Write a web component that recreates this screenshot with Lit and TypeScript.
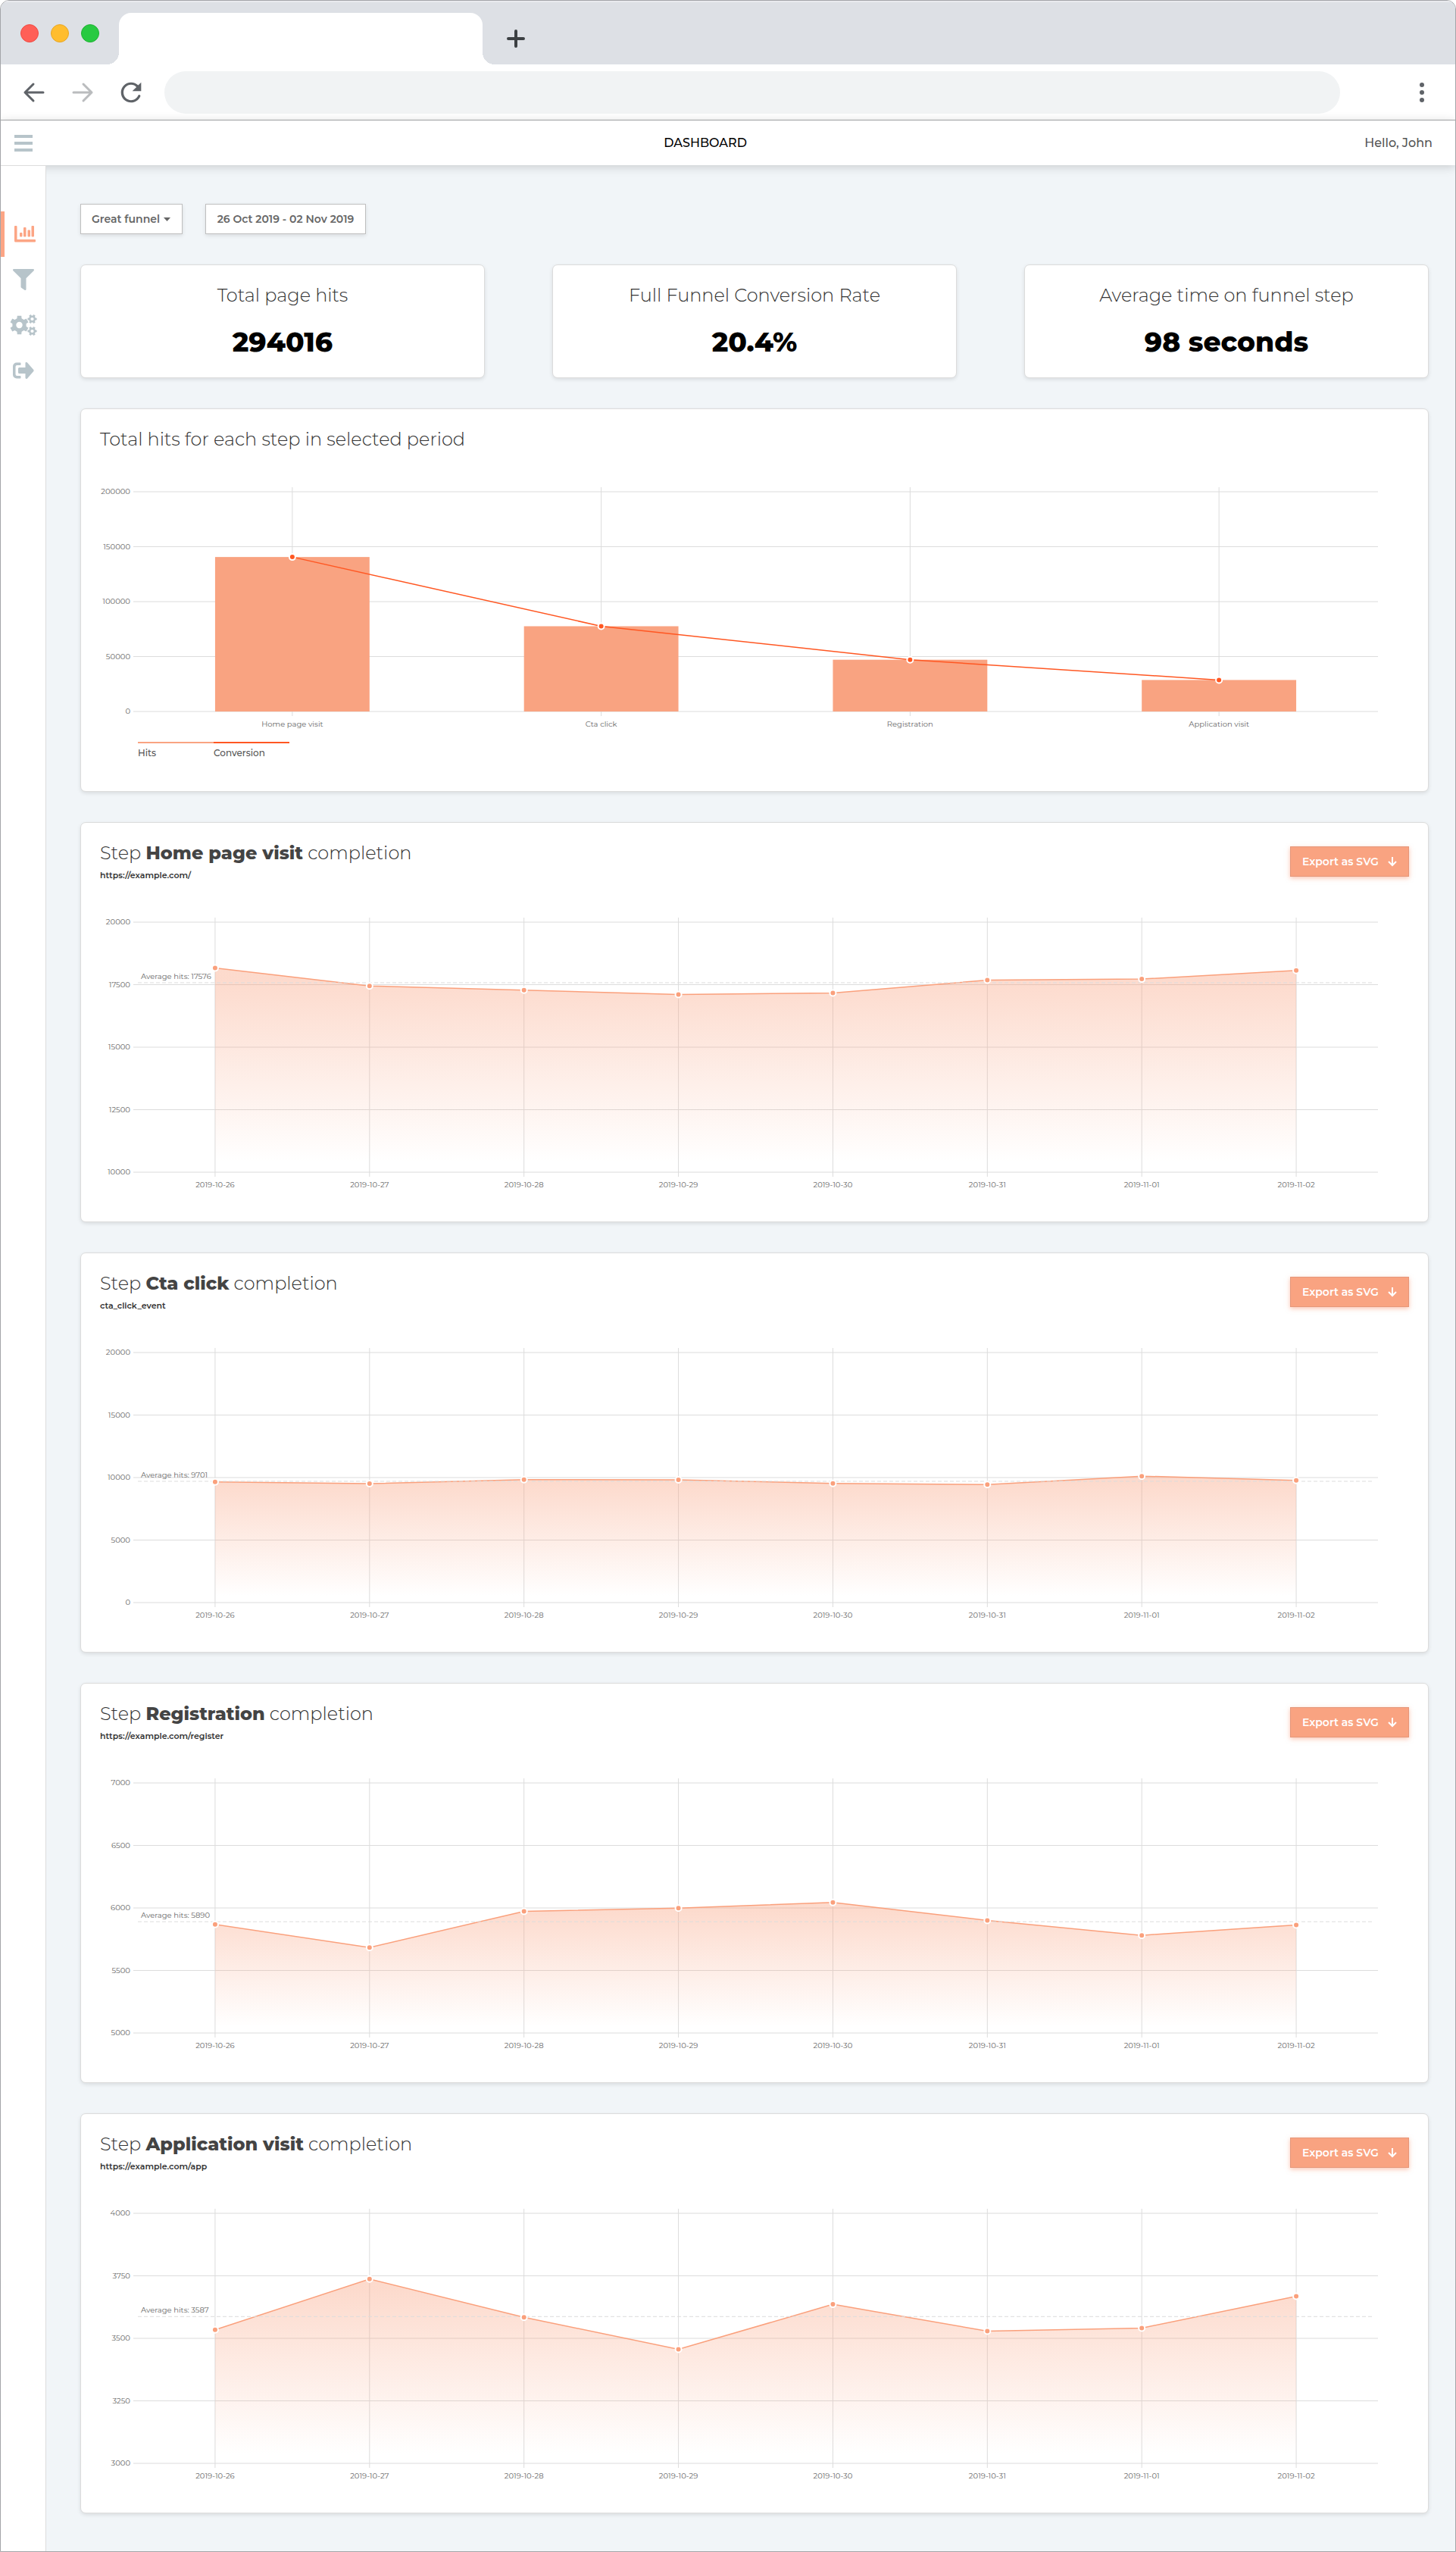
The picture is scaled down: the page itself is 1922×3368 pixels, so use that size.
import { LitElement, html, svg, css } from "lit";
import { customElement, property, state } from "lit/decorators.js";

interface Step {
  name: string;
  target: string;
  average: number;
  min: number;
  max: number;
  values: number[];
}

const DATES = [
  "2019-10-26",
  "2019-10-27",
  "2019-10-28",
  "2019-10-29",
  "2019-10-30",
  "2019-10-31",
  "2019-11-01",
  "2019-11-02",
];

const STATS = [
  { label: "Total page hits", value: "294016" },
  { label: "Full Funnel Conversion Rate", value: "20.4%" },
  { label: "Average time on funnel step", value: "98 seconds" },
];

const FUNNEL = [
  { label: "Home page visit", hits: 140608 },
  { label: "Cta click", hits: 77608 },
  { label: "Registration", hits: 47120 },
  { label: "Application visit", hits: 28680 },
];

const STEPS: Step[] = [
  {
    name: "Home page visit",
    target: "https://example.com/",
    average: 17576,
    min: 10000,
    max: 20000,
    values: [18165, 17448, 17280, 17105, 17170, 17680, 17724, 18070],
  },
  {
    name: "Cta click",
    target: "cta_click_event",
    average: 9701,
    min: 0,
    max: 20000,
    values: [9655, 9512, 9834, 9820, 9536, 9439, 10112, 9770],
  },
  {
    name: "Registration",
    target: "https://example.com/register",
    average: 5890,
    min: 5000,
    max: 7000,
    values: [5868, 5684, 5973, 5998, 6044, 5900, 5781, 5864],
  },
  {
    name: "Application visit",
    target: "https://example.com/app",
    average: 3587,
    min: 3000,
    max: 4000,
    values: [3534, 3737, 3584, 3456, 3636, 3529, 3541, 3668],
  },
];

const PLOT_LEFT = 50;
const PLOT_RIGHT = 47;
const TICK = 6;

/** Outline of a six-toothed gear with a round hole, for an even-odd fill. */
function gearPath(cx: number, cy: number, outer: number, hole: number, turn: number): string {
  const root = outer * 0.74;
  const points: string[] = [];
  for (let i = 0; i < 6; i++) {
    const mid = (i * 60 + turn) * (Math.PI / 180);
    const corners: Array<[number, number]> = [
      [-0.34, root],
      [-0.22, outer],
      [0.22, outer],
      [0.34, root],
    ];
    for (const [offset, radius] of corners) {
      const x = cx + Math.cos(mid + offset) * radius;
      const y = cy + Math.sin(mid + offset) * radius;
      points.push(`${x.toFixed(2)} ${y.toFixed(2)}`);
    }
  }
  return (
    `M${points.join("L")}Z` +
    `M${cx - hole} ${cy}a${hole} ${hole} 0 1 0 ${hole * 2} 0a${hole} ${hole} 0 1 0 ${-hole * 2} 0Z`
  );
}

const chartStyles = css`
  :host {
    display: block;
    min-width: 0;
  }
  svg {
    display: block;
    width: 100%;
  }
  text {
    font-family: Montserrat, Inter, sans-serif;
    font-size: 10px;
    fill: #666;
  }
  .grid {
    stroke: #dcdcdc;
    stroke-width: 1;
  }
  .end {
    text-anchor: end;
  }
  .middle {
    text-anchor: middle;
  }
`;

/** Base for charts that redraw to the width of their container. */
class SizedChart extends LitElement {
  @state() protected chartWidth = 1728;

  private observer?: ResizeObserver;

  connectedCallback() {
    super.connectedCallback();
    this.observer = new ResizeObserver((entries) => {
      const width = Math.round(entries[0].contentRect.width);
      if (width > 0) this.chartWidth = width;
    });
    this.observer.observe(this);
  }

  disconnectedCallback() {
    this.observer?.disconnect();
    super.disconnectedCallback();
  }

  protected centre(index: number, count: number): number {
    const span = this.chartWidth - PLOT_LEFT - PLOT_RIGHT;
    return PLOT_LEFT + (span / count) * (index + 0.5);
  }

  protected grid(top: number, bottom: number, ticks: number[], labels: string[]) {
    const right = this.chartWidth - PLOT_RIGHT + TICK;
    const gap = (bottom - top) / (ticks.length - 1);
    return svg`
      ${ticks.map((tick, i) => {
        const y = top + gap * i;
        return svg`
          <line class="grid" x1=${PLOT_LEFT - TICK} x2=${right} y1=${y} y2=${y}></line>
          <text class="end" x=${PLOT_LEFT - 10} y=${y + 3}>${tick}</text>`;
      })}
      ${labels.map((label, i) => {
        const x = this.centre(i, labels.length);
        return svg`
          <line class="grid" x1=${x} x2=${x} y1=${top - TICK} y2=${bottom + TICK}></line>
          <text class="middle" x=${x} y=${bottom + 20}>${label}</text>`;
      })}`;
  }
}

@customElement("funnel-chart")
export class FunnelChart extends SizedChart {
  static styles = [
    chartStyles,
    css`
      .bar {
        fill: #f9a381;
      }
      .line {
        fill: none;
        stroke: #ff5722;
        stroke-width: 1.5;
      }
      .dot {
        fill: #ff5722;
        stroke: #fff;
        stroke-width: 2;
      }
    `,
  ];

  render() {
    const top = 53;
    const bottom = 343;
    const max = 200000;
    const y = (value: number) => bottom - (value / max) * (bottom - top);
    const band = (this.chartWidth - PLOT_LEFT - PLOT_RIGHT) / FUNNEL.length;
    const points = FUNNEL.map((step, i) => ({ x: this.centre(i, FUNNEL.length), y: y(step.hits) }));
    return html`
      <svg height="368" role="img" aria-label="Hits and conversion by step">
        ${this.grid(top, bottom, [200000, 150000, 100000, 50000, 0], FUNNEL.map((s) => s.label))}
        ${points.map(
          (p) => svg`<rect class="bar" x=${p.x - band / 4} y=${p.y} width=${band / 2} height=${bottom - p.y}></rect>`,
        )}
        <polyline class="line" points=${points.map((p) => `${p.x},${p.y}`).join(" ")}></polyline>
        ${points.map((p) => svg`<circle class="dot" cx=${p.x} cy=${p.y} r="4"></circle>`)}
      </svg>
    `;
  }
}

@customElement("step-chart")
export class StepChart extends SizedChart {
  @property({ attribute: false }) step!: Step;

  static styles = [
    chartStyles,
    css`
      .area {
        fill: url(#fade);
      }
      .line {
        fill: none;
        stroke: #faa07c;
        stroke-width: 1.5;
      }
      .dot {
        fill: #faa07c;
        stroke: #fff;
        stroke-width: 2;
      }
      .average {
        stroke: #dcdcdc;
        stroke-dasharray: 5 3;
      }
    `,
  ];

  render() {
    const { min, max, values, average, name } = this.step;
    const top = 53;
    const bottom = 383;
    const y = (value: number) => bottom - ((value - min) / (max - min)) * (bottom - top);
    const ticks = [4, 3, 2, 1, 0].map((n) => min + ((max - min) / 4) * n);
    const points = values.map((v, i) => ({ x: this.centre(i, values.length), y: y(v) }));
    const path = points.map((p) => `${p.x},${p.y}`).join(" ");
    const first = points[0].x;
    const last = points[points.length - 1].x;
    return html`
      <svg height="424" role="img" aria-label="Daily hits for ${name}">
        <defs>
          <linearGradient id="fade" x1="0" y1="0" x2="0" y2="1">
            <stop offset="5%" stop-color="#f9a381" stop-opacity="0.4"></stop>
            <stop offset="95%" stop-color="#f9a381" stop-opacity="0"></stop>
          </linearGradient>
        </defs>
        ${this.grid(top, bottom, ticks, DATES)}
        <polygon class="area" points="${first},${bottom} ${path} ${last},${bottom}"></polygon>
        <polyline class="line" points=${path}></polyline>
        <line
          class="average"
          x1=${PLOT_LEFT}
          x2=${this.chartWidth - PLOT_RIGHT}
          y1=${y(average)}
          y2=${y(average)}
        ></line>
        <text x=${PLOT_LEFT + 4} y=${y(average) - 5}>Average hits: ${average}</text>
        ${points.map((p) => svg`<circle class="dot" cx=${p.x} cy=${p.y} r="4"></circle>`)}
      </svg>
    `;
  }
}

@customElement("browser-bar")
export class BrowserBar extends LitElement {
  static styles = css`
    :host {
      display: block;
    }
    .strip {
      display: flex;
      align-items: flex-end;
      height: 84px;
      background: #dde0e5;
      box-shadow: inset 0 2px 0 #e9eaee;
    }
    .lights {
      display: flex;
      align-self: center;
      gap: 16px;
      padding: 2px 26px 0 26px;
    }
    .light {
      width: 24px;
      height: 24px;
      box-sizing: border-box;
      border-radius: 50%;
    }
    .red {
      background: #ff5f57;
      border: 1px solid #f04a42;
    }
    .amber {
      background: #ffbd2e;
      border: 1px solid #e8a624;
    }
    .green {
      background: #28ca41;
      border: 1px solid #1fb232;
    }
    .tab {
      position: relative;
      width: 480px;
      height: 68px;
      background: #fff;
      border-radius: 16px 16px 0 0;
    }
    .tab::before,
    .tab::after {
      content: "";
      position: absolute;
      bottom: 0;
      width: 16px;
      height: 16px;
    }
    .tab::before {
      right: 100%;
      background: radial-gradient(circle at 0 0, transparent 16px, #fff 16px);
    }
    .tab::after {
      left: 100%;
      background: radial-gradient(circle at 100% 0, transparent 16px, #fff 16px);
    }
    button {
      display: flex;
      padding: 0;
      border: 0;
      background: none;
    }
    .plus {
      margin: 0 0 22px 32px;
    }
    .tools {
      display: flex;
      align-items: center;
      height: 73px;
      background: #fff;
      border-bottom: 1px solid #a9abad;
    }
    .nav {
      display: flex;
      gap: 24px;
      padding: 0 24px;
    }
    .address {
      flex: 1;
      min-width: 0;
      height: 56px;
      box-sizing: border-box;
      padding: 0 28px;
      border: 0;
      border-radius: 28px;
      background: #f1f3f4;
      font: 18px Inter, sans-serif;
    }
    .menu {
      margin: 0 24px 0 88px;
    }
  `;

  render() {
    return html`
      <div class="strip">
        <div class="lights">
          <span class="light red"></span>
          <span class="light amber"></span>
          <span class="light green"></span>
        </div>
        <div class="tab"></div>
        <button class="plus" aria-label="New tab">
          <svg width="24" height="24" fill="none" stroke="#3c4043" stroke-width="4" stroke-linecap="round">
            <path d="M12 2V22M2 12H22"></path>
          </svg>
        </button>
      </div>
      <div class="tools">
        <div class="nav">
          <button aria-label="Back">
            <svg width="40" height="40" fill="none" stroke="#5f6368" stroke-width="3" stroke-linecap="round" stroke-linejoin="round">
              <path d="M32 20H8M19 9L8 20L19 31"></path>
            </svg>
          </button>
          <button aria-label="Forward">
            <svg width="40" height="40" fill="none" stroke="#babcbe" stroke-width="3" stroke-linecap="round" stroke-linejoin="round">
              <path d="M8 20H32M21 9L32 20L21 31"></path>
            </svg>
          </button>
          <button aria-label="Reload">
            <svg width="40" height="40" viewBox="0 0 24 24" fill="#5f6368">
              <path
                d="M17.65 6.35C16.2 4.9 14.21 4 12 4c-4.42 0-7.99 3.58-7.99 8s3.57 8 7.99 8c3.3 0 6.1-2 7.35-4.85a.9.9 0 0 0-1.7-.75C16.7 16.6 14.5 18.1 12 18.1c-3.31 0-6-2.79-6-6.1s2.69-6.1 6-6.1c1.66 0 3.14.75 4.22 1.88L13 11h7V4z"
              ></path>
            </svg>
          </button>
        </div>
        <input class="address" type="text" aria-label="Address" />
        <button class="menu" aria-label="Menu">
          <svg width="40" height="40" fill="#5f6368">
            <circle cx="20" cy="10" r="3"></circle>
            <circle cx="20" cy="20" r="3"></circle>
            <circle cx="20" cy="30" r="3"></circle>
          </svg>
        </button>
      </div>
    `;
  }
}

@customElement("app-root")
export class AppRoot extends LitElement {
  static styles = css`
    :host {
      display: block;
      font-family: Montserrat, Inter, sans-serif;
      font-size: 14px;
      color: #444;
      background: #fff;
    }
    .window {
      overflow: hidden;
      border: 1px solid #a3a5a8;
      border-radius: 12px 12px 0 0;
    }
    .header {
      position: relative;
      display: flex;
      align-items: center;
      justify-content: space-between;
      height: 59px;
      padding-right: 30px;
      background: #fff;
      box-shadow: 0 2px 12px rgba(0, 0, 0, 0.18);
    }
    .burger {
      display: flex;
      justify-content: center;
      width: 60px;
      padding: 0;
      border: 0;
      background: none;
    }
    .title {
      margin: 0;
      font-size: 16px;
      font-weight: 500;
      color: #000;
    }
    .user {
      font-size: 16px;
      font-weight: 500;
      color: #555;
    }
    .body {
      display: flex;
    }
    .side {
      position: relative;
      flex: none;
      width: 60px;
      box-sizing: border-box;
      padding-top: 60px;
      background: #fff;
      border-top: 1px solid #dcdcdc;
      border-right: 1px solid #dcdcdc;
    }
    .side a {
      display: flex;
      align-items: center;
      justify-content: center;
      height: 60px;
      box-sizing: border-box;
      fill: #b7c4ca;
    }
    .side a.active {
      fill: #fca585;
      border-left: 5px solid #fca585;
    }
    .main {
      flex: 1;
      display: flex;
      flex-direction: column;
      gap: 40px;
      min-width: 0;
      padding: 51px 35px 50px 45px;
      background: #f1f5f8;
    }
    .filters {
      display: flex;
      gap: 30px;
    }
    .picker {
      position: relative;
      display: flex;
    }
    .caret {
      position: absolute;
      right: 16px;
      top: 18px;
      pointer-events: none;
    }
    .field {
      height: 40px;
      box-sizing: border-box;
      margin: 0;
      padding: 0 14px;
      border: 1px solid #bfbfbf;
      border-radius: 0;
      background: #fff;
      box-shadow: 0 2px 5px rgba(0, 0, 0, 0.1);
      font-family: inherit;
      font-size: 14px;
      font-weight: 600;
      color: #666;
    }
    .select {
      appearance: none;
      min-width: 135px;
      padding-right: 28px;
    }
    .date {
      min-width: 212px;
    }
    .stats {
      display: grid;
      grid-template-columns: repeat(3, 30%);
      justify-content: space-between;
    }
    .card {
      padding: 24px 25px;
      background: #fff;
      border: 1px solid #dcdcdc;
      border-radius: 7px;
      box-shadow: 0 2px 5px rgba(0, 0, 0, 0.1);
    }
    .stat {
      display: flex;
      flex-direction: column;
      align-items: center;
      gap: 25px;
      padding-bottom: 27px;
    }
    .heading {
      margin: 0;
      font-size: 24px;
      line-height: 32px;
      font-weight: 300;
      color: #333;
    }
    .heading strong {
      font-weight: 800;
      color: #444;
    }
    .value {
      font-size: 36px;
      line-height: 40px;
      font-weight: 800;
      color: #000;
    }
    .legend {
      display: flex;
      margin: 15px 0 18px 50px;
      padding: 0;
      list-style: none;
    }
    .legend li {
      width: 100px;
      padding-top: 5px;
      border-top: 2px solid #f9a381;
      font-size: 12px;
      line-height: 16px;
      font-weight: 500;
      color: #555;
    }
    .legend li.conversion {
      border-color: #ff5722;
    }
    .top {
      display: flex;
      align-items: center;
      justify-content: space-between;
    }
    .names {
      display: flex;
      flex-direction: column;
      gap: 4px;
    }
    .target {
      font-size: 11px;
      line-height: 18px;
      font-weight: 600;
      color: #333;
    }
    .export {
      display: flex;
      align-items: center;
      justify-content: space-between;
      min-width: 157px;
      height: 40px;
      padding: 0 15px;
      border: 1px solid #e5977a;
      background: #f9a381;
      box-shadow: 0 2px 6px rgba(249, 140, 100, 0.5);
      font-family: inherit;
      font-size: 14px;
      font-weight: 600;
      color: #fff;
    }
  `;

  private stepCard(step: Step) {
    return html`
      <section class="card">
        <div class="top">
          <div class="names">
            <h2 class="heading">Step <strong>${step.name}</strong> completion</h2>
            <span class="target">${step.target}</span>
          </div>
          <button class="export">
            Export as SVG
            <svg width="12" height="14" fill="none" stroke="#fff" stroke-width="2">
              <path d="M6 1V12M1 7L6 12L11 7"></path>
            </svg>
          </button>
        </div>
        <step-chart .step=${step}></step-chart>
      </section>
    `;
  }

  render() {
    return html`
      <div class="window">
        <browser-bar></browser-bar>
        <header class="header">
          <button class="burger" aria-label="Toggle navigation">
            <svg width="24" height="22" fill="#b7c4ca">
              <rect width="24" height="4"></rect>
              <rect y="9" width="24" height="4"></rect>
              <rect y="18" width="24" height="4"></rect>
            </svg>
          </button>
          <h1 class="title">DASHBOARD</h1>
          <span class="user">Hello, John</span>
        </header>
        <div class="body">
          <nav class="side">
            <a class="active" href="#dashboard" aria-label="Dashboard">
              <svg width="28" height="22">
                <path
                  d="M1 0H2.5A1 1 0 0 1 3.5 1V18H27A1 1 0 0 1 28 19V20.5A1 1 0 0 1 27 21.5H1.5A1.5 1.5 0 0 1 0 20V1A1 1 0 0 1 1 0Z"
                ></path>
                <rect x="7" y="9" width="3.5" height="5.5" rx="1"></rect>
                <rect x="12" y="2" width="3.5" height="12.5" rx="1"></rect>
                <rect x="17.5" y="5.5" width="3.5" height="9" rx="1"></rect>
                <rect x="22.5" y="0" width="3.5" height="14.5" rx="1"></rect>
              </svg>
            </a>
            <a href="#funnels" aria-label="Funnels">
              <svg width="28" height="28" viewBox="0 0 512 512">
                <path
                  d="M487.976 0H24.028C2.71 0-8.047 25.866 7.058 40.971L192 225.941V432c0 7.831 3.821 15.17 10.237 19.662l80 55.98C298.02 518.69 320 507.493 320 487.98V225.941l184.947-184.97C520.021 25.896 509.338 0 487.976 0z"
                ></path>
              </svg>
            </a>
            <a href="#settings" aria-label="Settings">
              <svg width="36" height="28" fill-rule="evenodd">
                <path d=${gearPath(12.5, 14, 12.5, 4.2, 30)}></path>
                <path d=${gearPath(29.5, 6, 6.2, 2.1, 0)}></path>
                <path d=${gearPath(29.5, 22, 6.2, 2.1, 0)}></path>
              </svg>
            </a>
            <a href="#logout" aria-label="Log out">
              <svg width="28" height="24">
                <path
                  d="M5 1.5H9.5A1 1 0 0 1 10.5 2.5V4A1 1 0 0 1 9.5 5H5.5A2 2 0 0 0 3.5 7V17A2 2 0 0 0 5.5 19H9.5A1 1 0 0 1 10.5 20V21.5A1 1 0 0 1 9.5 22.5H5A5 5 0 0 1 0 17.5V6.5A5 5 0 0 1 5 1.5Z"
                ></path>
                <path
                  d="M8.5 8H16.5V2.5C16.5 1 18 .6 19 1.6L27.3 11Q28 12 27.3 13L19 22.4C18 23.4 16.5 23 16.5 21.5V16H8.5A1.5 1.5 0 0 1 7 14.5V9.5A1.5 1.5 0 0 1 8.5 8Z"
                ></path>
              </svg>
            </a>
          </nav>
          <main class="main">
            <div class="filters">
              <div class="picker">
                <select class="field select" aria-label="Funnel">
                  <option>Great funnel</option>
                </select>
                <svg class="caret" width="9" height="5" fill="#666">
                  <path d="M0 0H9L4.5 5Z"></path>
                </svg>
              </div>
              <button class="field date">26 Oct 2019 - 02 Nov 2019</button>
            </div>
            <div class="stats">
              ${STATS.map(
                (stat) => html`
                  <section class="card stat">
                    <h2 class="heading">${stat.label}</h2>
                    <span class="value">${stat.value}</span>
                  </section>
                `,
              )}
            </div>
            <section class="card">
              <h2 class="heading">Total hits for each step in selected period</h2>
              <funnel-chart></funnel-chart>
              <ul class="legend">
                <li>Hits</li>
                <li class="conversion">Conversion</li>
              </ul>
            </section>
            ${STEPS.map((step) => this.stepCard(step))}
          </main>
        </div>
      </div>
    `;
  }
}
